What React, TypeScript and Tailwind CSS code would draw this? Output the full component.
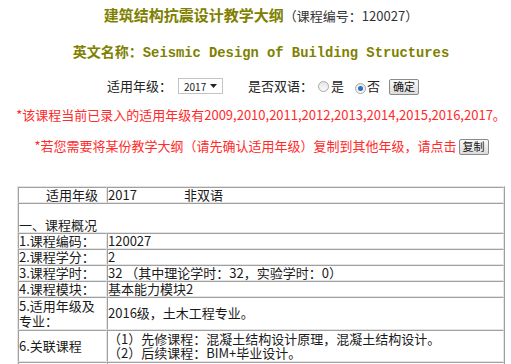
import React from "react";

const FONT = { fontFamily: '"Noto Sans CJK SC", "Noto Sans", sans-serif' };

function Radio({ checked }: { checked?: boolean }) {
  return (
    <span className="inline-flex w-[11px] h-[11px] rounded-full border border-[#a8a8a8] bg-gradient-to-b from-[#e6e6e6] to-[#fafafa] items-center justify-center">
      {checked && <span className="w-[5px] h-[5px] rounded-full bg-[#2a6fc0]" />}
    </span>
  );
}

function SmallButton({ label }: { label: string }) {
  return (
    <span className="inline-flex items-center justify-center w-[30px] h-[16px] rounded-[2px] border border-[#8a8a8a] bg-gradient-to-b from-[#fafafa] to-[#dcdcdc] text-[11px] leading-none text-[#111]">
      {label}
    </span>
  );
}

const td =
  "border border-t-[#a0a0a0] border-l-[#a0a0a0] border-r-[#e4e4e4] border-b-[#e4e4e4] p-0 align-middle";

export default function App() {
  return (
    <div className="min-h-screen bg-white text-[#1a1a1a]" style={FONT}>
      <div className="ml-[17px] w-[488px] pt-[4px]">
        {/* title */}
        <div className="text-center leading-[20px]">
          <span className="text-[15px] font-bold text-[#808000]">建筑结构抗震设计教学大纲</span>
          <span className="text-[13px] text-[#333]">（课程编号：120027）</span>
        </div>
        <div className="mt-[15px] text-center leading-[20px] text-[14px] font-bold text-[#808000]">
          英文名称：
          <span className="text-[13.8px]" style={{ fontFamily: '"Liberation Mono", "Noto Sans CJK SC", monospace' }}>
            Seismic Design of Building Structures
          </span>
        </div>

        {/* controls */}
        <div className="mt-[13px] flex items-center h-[18px] pl-[90px] text-[13px] text-[#222]">
          <span className="w-[71px]">适用年级：</span>
          <span className="w-[45px] h-[16px] border border-[#c4c4c4] bg-white flex items-center justify-between px-[5px] text-[10px]">
            2017
            <svg width="7" height="4" viewBox="0 0 7 4">
              <path d="M0 0h7L3.5 4z" fill="#222" />
            </svg>
          </span>
          <span className="ml-[25px] w-[70px]">是否双语：</span>
          <Radio />
          <span className="ml-[2px]">是</span>
          <span className="ml-[11px]"><Radio checked /></span>
          <span className="ml-[1px]">否</span>
          <span className="ml-[9px]"><SmallButton label="确定" /></span>
        </div>

        {/* notes */}
        <div className="mt-[12px] -mx-[10px] text-center whitespace-nowrap text-[13px] leading-[16px] text-[#ff2a2a]">
          *该课程当前已录入的适用年级有2009,2010,2011,2012,2013,2014,2015,2016,2017。
        </div>
        <div className="mt-[15px] flex items-center justify-center whitespace-nowrap text-[13px] leading-[16px] text-[#ff2a2a] pl-[1px]">
          <span>*若您需要将某份教学大纲（请先确认适用年级）复制到其他年级，请点击</span>
          <span className="ml-[2px]"><SmallButton label="复制" /></span>
        </div>

        {/* syllabus table */}
        <table className="mt-[31px] w-full table-fixed border-separate border-spacing-0 border border-t-[#e4e4e4] border-l-[#e4e4e4] border-r-[#a0a0a0] border-b-[#a0a0a0] text-[13px] leading-[14px]">
          <colgroup>
            <col className="w-[89px]" />
            <col />
          </colgroup>
          <tbody>
            <tr>
              <td className={`${td} text-right pr-[8px]`}>适用年级</td>
              <td className={td}>
                2017<span className="ml-[47px]">非双语</span>
              </td>
            </tr>
            <tr>
              <td className={`${td} align-bottom`} colSpan={2}>
                <br />
                一、课程概况
              </td>
            </tr>
            <tr>
              <td className={td}>1.课程编码：</td>
              <td className={td}>120027</td>
            </tr>
            <tr>
              <td className={td}>2.课程学分：</td>
              <td className={td}>2</td>
            </tr>
            <tr>
              <td className={td}>3.课程学时：</td>
              <td className={td}>32 （其中理论学时：32，实验学时：0）</td>
            </tr>
            <tr>
              <td className={td}>4.课程模块：</td>
              <td className={td}>基本能力模块2</td>
            </tr>
            <tr>
              <td className={`${td} h-[33px] leading-[15px]`}>
                5.适用年级及
                <br />
                专业：
              </td>
              <td className={td}>2016级，土木工程专业。</td>
            </tr>
            <tr>
              <td className={`${td} h-[32px]`}>6.关联课程</td>
              <td className={td}>
                （1）先修课程：混凝土结构设计原理，混凝土结构设计。
                <br />
                （2）后续课程：BIM+毕业设计。
              </td>
            </tr>
            <tr>
              <td className={td}>7.课程目标</td>
              <td className={td}>
                本课程是土木工程专业的一门专业课，主要讲授结构抗震设计的基本原理与方法。
              </td>
            </tr>
          </tbody>
        </table>
      </div>
    </div>
  );
}
